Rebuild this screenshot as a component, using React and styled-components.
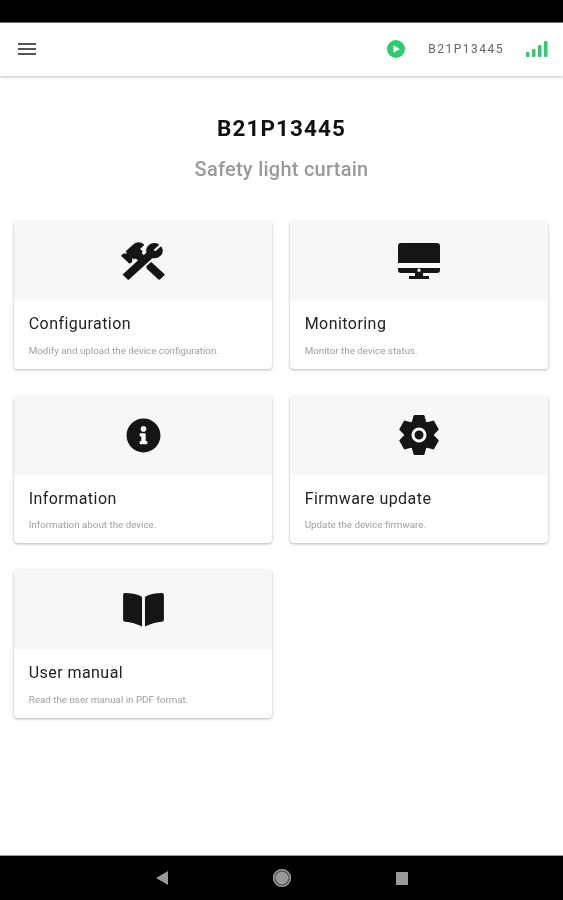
import React from 'react'
import styled, {createGlobalStyle} from 'styled-components'
import {MdMenu} from 'react-icons/md'
import {FaInfoCircle} from 'react-icons/fa'

const GlobalStyle = createGlobalStyle`
  html, body {
    margin: 0;
    padding: 0;
    background: #fff;
    font-family: Roboto, "Liberation Sans", sans-serif;
  }
`

//---------------------------------------------------------------------
// icons
const HammerWrench = () => (
  <svg viewBox="0 0 24 24" width="50" height="46" preserveAspectRatio="none" fill="currentColor" stroke="currentColor" strokeWidth="1" strokeLinejoin="round">
    <path d="M13.78 15.3L19.78 21.3L21.89 19.14L15.89 13.14L13.78 15.3M17.5 10.1C17.11 10.1 16.69 10.05 16.36 9.91L4.97 21.25L2.86 19.14L10.27 11.74L8.5 9.96L7.78 10.66L6.33 9.25V12.11L5.63 12.81L2.11 9.25L2.81 8.55H5.62L4.22 7.14L7.78 3.58C8.95 2.41 10.83 2.41 12 3.58L9.89 5.74L11.3 7.14L10.59 7.85L12.38 9.63L14.2 7.75C14.06 7.42 14 7 14 6.63C14 4.66 15.56 3.11 17.5 3.11C18.09 3.11 18.61 3.25 19.08 3.53L16.41 6.2L17.91 7.7L20.58 5.03C20.86 5.5 21 6 21 6.63C21 8.55 19.45 10.1 17.5 10.1Z" />
  </svg>
)

const Desktop = () => (
  <svg viewBox="0 0 42 36" width="42" height="36" fill="currentColor">
    <path d="M3 0H39A3 3 0 0 1 42 3V20H0V3A3 3 0 0 1 3 0Z" />
    <path fillRule="evenodd" d="M0 25H42V27A3 3 0 0 1 39 30H25V33H31V36H11V33H17V30H3A3 3 0 0 1 0 27ZM21 25.500A1.700 1.700 0 1 0 21 28.900A1.700 1.700 0 1 0 21 25.500Z" />
  </svg>
)

const Gear = () => (
  <svg viewBox="0 0 40 40" width="40" height="40">
    <g fill="currentColor">
      {[0, 60, 120, 180, 240, 300].map(angle => (
        <path key={angle} d="M15.500 1H24.500L27 10H13Z" stroke="currentColor" strokeWidth="2" strokeLinejoin="round" transform={`rotate(${angle} 20 20)`} />
      ))}
      <circle cx="20" cy="20" r="15" />
    </g>
    <circle cx="20" cy="20" r="6" fill="none" stroke="#f7f7f7" strokeWidth="3" />
  </svg>
)

const Book = () => (
  <svg viewBox="0 0 42 35" width="41" height="34" fill="currentColor">
    <path d="M2 0C8 0 14 1 18 3C19 3.500 19.500 4 19.500 5.500V34.500C14 31.500 8 30 2 29.500C0.800 29.400 0 28.600 0 27.500V2C0 0.800 0.800 0 2 0Z" />
    <path d="M40 0C34 0 28 1 24 3C23 3.500 22.500 4 22.500 5.500V34.500C28 31.500 34 30 40 29.500C41.200 29.400 42 28.600 42 27.500V2C42 0.800 41.200 0 40 0Z" />
  </svg>
)

const PlayCircle = () => (
  <svg viewBox="0 0 18 18" width="18" height="18">
    <circle cx="9" cy="9" r="9" fill="#2ecc71" />
    <path d="M6.500 5.200L12.800 9L6.500 12.800Z" fill="#fff" />
  </svg>
)

const Signal = () => (
  <svg viewBox="0 0 22 16" width="22" height="16" fill="#2ecc71">
    <rect x="0" y="11" width="3.500" height="5" rx="1" />
    <rect x="6" y="8" width="3.500" height="8" rx="1" />
    <rect x="12" y="4" width="3.500" height="12" rx="1" />
    <rect x="18" y="0" width="3.500" height="16" rx="1" />
  </svg>
)

//---------------------------------------------------------------------
const cards = [
  {title: 'Configuration', text: 'Modify and upload the device configuration.', icon: <HammerWrench />},
  {title: 'Monitoring', text: 'Monitor the device status.', icon: <Desktop />},
  {title: 'Information', text: 'Information about the device.', icon: <FaInfoCircle size={35} />},
  {title: 'Firmware update', text: 'Update the device firmware.', icon: <Gear />},
  {title: 'User manual', text: 'Read the user manual in PDF format.', icon: <Book />}
]

export default () => {
  return (
    <Page>
      <GlobalStyle />
      <StatusBar />
      <AppBar>
        <MenuButton>
          <MdMenu size={24} />
        </MenuButton>
        <AppBarRight>
          <PlayCircle />
          <DeviceId>B21P13445</DeviceId>
          <Signal />
        </AppBarRight>
      </AppBar>
      <Content>
        <Title>B21P13445</Title>
        <Subtitle>Safety light curtain</Subtitle>
        <CardGrid>
          {cards.map(card => (
            <Card key={card.title}>
              <CardIcon>{card.icon}</CardIcon>
              <CardBody>
                <CardTitle>{card.title}</CardTitle>
                <CardText>{card.text}</CardText>
              </CardBody>
            </Card>
          ))}
        </CardGrid>
      </Content>
      <NavBar>
        <BackButton />
        <HomeButton />
        <RecentButton />
      </NavBar>
    </Page>
  )
}

//---------------------------------------------------------------------
const Page = styled.div`
  display: flex;
  flex-direction: column;
  width: 563px;
  height: 900px;
  overflow: hidden;
  background: #fff;
  filter: blur(0.35px);
`
const StatusBar = styled.div`
  flex: none;
  box-sizing: border-box;
  height: 23px;
  border-bottom: 1px solid #777;
  background: #000;
`
const AppBar = styled.header`
  flex: none;
  display: flex;
  align-items: center;
  justify-content: space-between;
  box-sizing: border-box;
  height: 53px;
  padding: 0 15px 2px 15px;
  background: #fff;
  box-shadow: 0 1px 3px rgba(0, 0, 0, 0.25);
`
const MenuButton = styled.div`
  display: flex;
  color: #555;
`
const AppBarRight = styled.div`
  display: flex;
  align-items: center;
`
const DeviceId = styled.span`
  margin: 0 22px 0 23px;
  font-size: 12px;
  letter-spacing: 1.5px;
  color: #666;
`
const Content = styled.main`
  flex: 1;
  display: flex;
  flex-direction: column;
  align-items: center;
`
const Title = styled.h1`
  margin: 38px 0 0;
  font-size: 22.5px;
  line-height: 28px;
  font-weight: 700;
  letter-spacing: 1.1px;
  color: #111;
`
const Subtitle = styled.h2`
  margin: 13px 0 0;
  font-size: 20px;
  line-height: 28px;
  font-weight: 500;
  letter-spacing: 0.25px;
  color: #9a9a9e;
`
const CardGrid = styled.div`
  display: grid;
  grid-template-columns: 258px 258px;
  column-gap: 18px;
  row-gap: 27px;
  margin: 38px 1px 0 0;
`
const Card = styled.article`
  height: 147.5px;
  border-radius: 4px;
  overflow: hidden;
  background: #fff;
  box-shadow: 0 1px 3px rgba(0, 0, 0, 0.3);
`
const CardIcon = styled.div`
  display: flex;
  align-items: center;
  justify-content: center;
  height: 79px;
  background: #f7f7f7;
  color: #151515;
`
const CardBody = styled.div`
  padding: 14px 14.7px 0;
`
const CardTitle = styled.div`
  font-size: 16px;
  line-height: 20px;
  letter-spacing: 0.45px;
  color: #222;
`
const CardText = styled.div`
  margin-top: 10.5px;
  font-size: 9.8px;
  line-height: 12px;
  color: #a0a0a0;
`
const NavBar = styled.nav`
  flex: none;
  display: flex;
  align-items: center;
  justify-content: center;
  gap: 105px;
  height: 45px;
  border-top: 1px solid #999;
  box-sizing: border-box;
  background: #000;
`
const BackButton = styled.div`
  width: 0;
  height: 0;
  border-style: solid;
  border-width: 7px 12px 7px 0;
  border-color: transparent #999 transparent transparent;
`
const HomeButton = styled.div`
  box-sizing: border-box;
  width: 18px;
  height: 18px;
  border-radius: 50%;
  background: #999;
  box-shadow: inset 0 0 0 1.500px #999, inset 0 0 0 2.500px #444;
`
const RecentButton = styled.div`
  width: 12px;
  height: 13px;
  background: #999;
`
